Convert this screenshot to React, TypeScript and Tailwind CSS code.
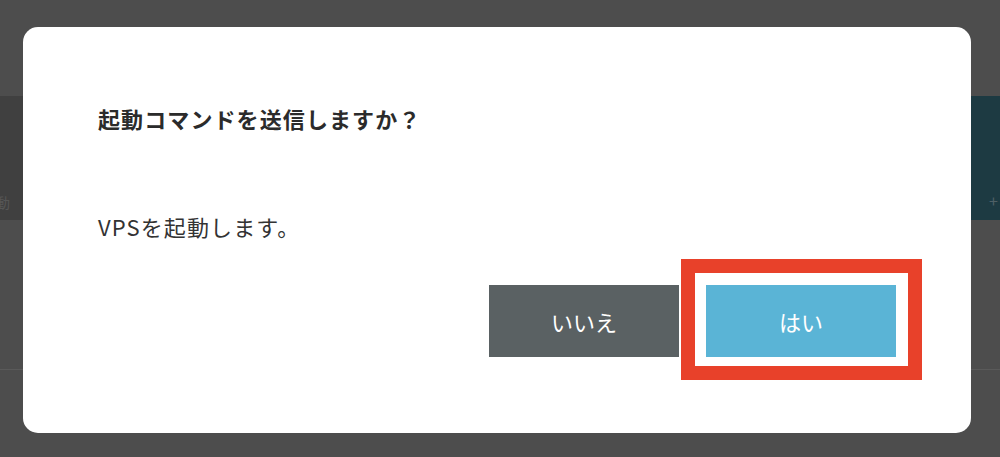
import React from 'react';

const font = { fontFamily: '"Noto Sans CJK JP", "Noto Sans", sans-serif' };

export default function App() {
  return (
    <div className="relative h-[457px] w-full overflow-hidden bg-[#4d4d4d]" style={font}>
      {/* page behind the overlay */}
      <div className="h-[96px]" />
      <div className="flex h-[124px]">
        <div className="relative flex-1 bg-[#404040]">
          <span className="absolute left-[-4px] top-[96px] text-[14px] text-[#565656]">動</span>
        </div>
        <div className="relative w-[30px] bg-[#1d3a42]">
          <span className="absolute left-[19px] top-[92px] text-[16px] text-[#4f6066]">+</span>
        </div>
      </div>
      <div className="h-[150px] border-b border-[#5a5a5a]" />

      {/* dialog */}
      <div className="absolute left-[23px] top-[27px] flex h-[406px] w-[948px] flex-col rounded-[15px] bg-white px-[75px] pt-[76px]">
        <h2 className="text-[22px] font-bold leading-[30px] tracking-[0.05em] text-[#2b2b2b]">
          起動コマンドを送信しますか？
        </h2>
        <p className="mt-[78px] text-[22px] leading-[30px] tracking-[0.05em] text-[#333333]">VPSを起動します。</p>
        <div className="mt-[44px] flex justify-end gap-[27px]">
          <button className="h-[72px] w-[190px] bg-[#5a6163] text-[22px] text-white">いいえ</button>
          <div className="relative">
            <div className="absolute left-[-25px] top-[-26px] h-[121px] w-[241px] border-[14px] border-[#e8412a]" />
            <button className="relative h-[72px] w-[190px] bg-[#5ab4d6] text-[22px] text-white">はい</button>
          </div>
        </div>
      </div>
    </div>
  );
}
